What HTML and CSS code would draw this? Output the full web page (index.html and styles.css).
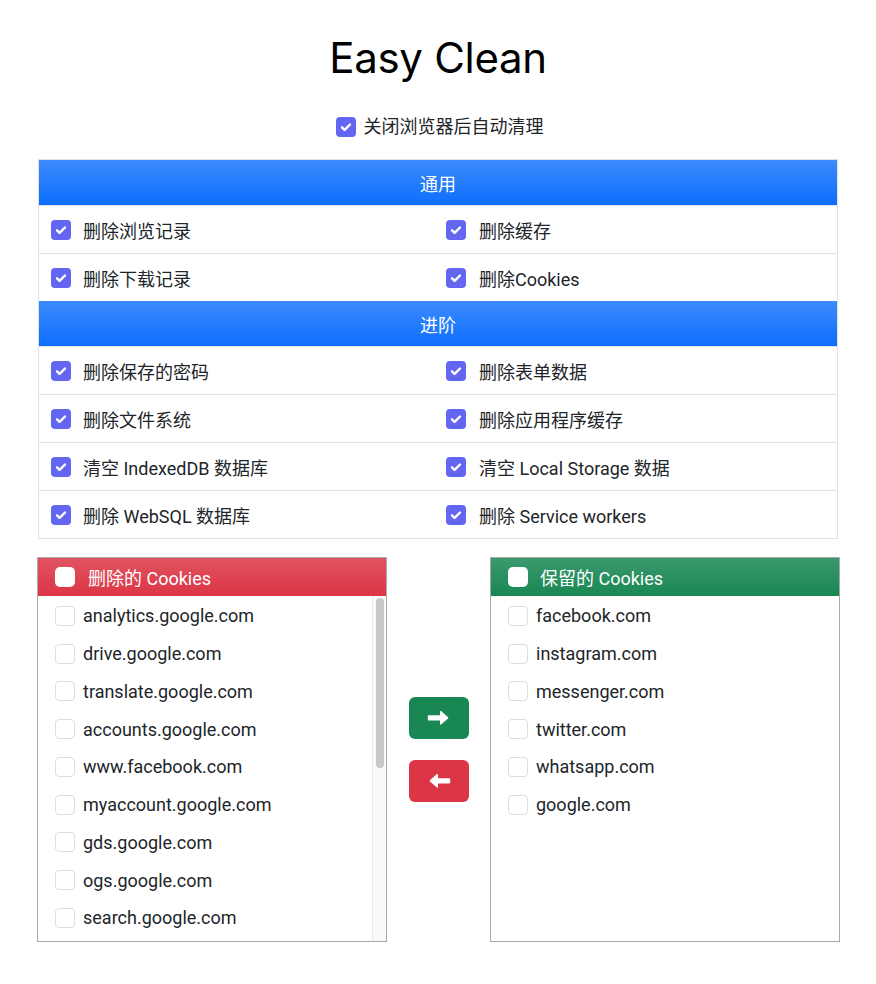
FILE: index.html
```html
<!DOCTYPE html>
<html lang="zh-CN">
<head>
<meta charset="utf-8">
<title>Easy Clean</title>
<link rel="stylesheet" href="styles.css">
</head>
<body>
<h1 class="title">Easy Clean</h1>

<label class="auto">
  <span class="cb on"><svg viewBox="0 0 20 20"><path d="M6 10.3l2.6 2.6L14 7.5" fill="none" stroke="#fff" stroke-width="2.4" stroke-linecap="round" stroke-linejoin="round"/></svg></span>
  <span>关闭浏览器后自动清理</span>
</label>

<div class="table">
  <div class="thead">通用</div>
  <div class="trow">
    <label class="cell"><span class="cb on"><svg viewBox="0 0 20 20"><path d="M6 10.3l2.6 2.6L14 7.5" fill="none" stroke="#fff" stroke-width="2.4" stroke-linecap="round" stroke-linejoin="round"/></svg></span>删除浏览记录</label>
    <label class="cell c2"><span class="cb on"><svg viewBox="0 0 20 20"><path d="M6 10.3l2.6 2.6L14 7.5" fill="none" stroke="#fff" stroke-width="2.4" stroke-linecap="round" stroke-linejoin="round"/></svg></span>删除缓存</label>
  </div>
  <div class="trow">
    <label class="cell"><span class="cb on"><svg viewBox="0 0 20 20"><path d="M6 10.3l2.6 2.6L14 7.5" fill="none" stroke="#fff" stroke-width="2.4" stroke-linecap="round" stroke-linejoin="round"/></svg></span>删除下载记录</label>
    <label class="cell c2"><span class="cb on"><svg viewBox="0 0 20 20"><path d="M6 10.3l2.6 2.6L14 7.5" fill="none" stroke="#fff" stroke-width="2.4" stroke-linecap="round" stroke-linejoin="round"/></svg></span>删除Cookies</label>
  </div>
  <div class="thead">进阶</div>
  <div class="trow">
    <label class="cell"><span class="cb on"><svg viewBox="0 0 20 20"><path d="M6 10.3l2.6 2.6L14 7.5" fill="none" stroke="#fff" stroke-width="2.4" stroke-linecap="round" stroke-linejoin="round"/></svg></span>删除保存的密码</label>
    <label class="cell c2"><span class="cb on"><svg viewBox="0 0 20 20"><path d="M6 10.3l2.6 2.6L14 7.5" fill="none" stroke="#fff" stroke-width="2.4" stroke-linecap="round" stroke-linejoin="round"/></svg></span>删除表单数据</label>
  </div>
  <div class="trow">
    <label class="cell"><span class="cb on"><svg viewBox="0 0 20 20"><path d="M6 10.3l2.6 2.6L14 7.5" fill="none" stroke="#fff" stroke-width="2.4" stroke-linecap="round" stroke-linejoin="round"/></svg></span>删除文件系统</label>
    <label class="cell c2"><span class="cb on"><svg viewBox="0 0 20 20"><path d="M6 10.3l2.6 2.6L14 7.5" fill="none" stroke="#fff" stroke-width="2.4" stroke-linecap="round" stroke-linejoin="round"/></svg></span>删除应用程序缓存</label>
  </div>
  <div class="trow">
    <label class="cell"><span class="cb on"><svg viewBox="0 0 20 20"><path d="M6 10.3l2.6 2.6L14 7.5" fill="none" stroke="#fff" stroke-width="2.4" stroke-linecap="round" stroke-linejoin="round"/></svg></span>清空 IndexedDB 数据库</label>
    <label class="cell c2"><span class="cb on"><svg viewBox="0 0 20 20"><path d="M6 10.3l2.6 2.6L14 7.5" fill="none" stroke="#fff" stroke-width="2.4" stroke-linecap="round" stroke-linejoin="round"/></svg></span>清空 Local Storage 数据</label>
  </div>
  <div class="trow">
    <label class="cell"><span class="cb on"><svg viewBox="0 0 20 20"><path d="M6 10.3l2.6 2.6L14 7.5" fill="none" stroke="#fff" stroke-width="2.4" stroke-linecap="round" stroke-linejoin="round"/></svg></span>删除 WebSQL 数据库</label>
    <label class="cell c2"><span class="cb on"><svg viewBox="0 0 20 20"><path d="M6 10.3l2.6 2.6L14 7.5" fill="none" stroke="#fff" stroke-width="2.4" stroke-linecap="round" stroke-linejoin="round"/></svg></span>删除 Service workers</label>
  </div>
</div>

<div class="cookies">
  <div class="box">
    <div class="bhead red"><span class="cb white"></span>删除的 Cookies</div>
    <div class="lwrap">
      <ul class="list">
        <li><span class="cb off"></span>analytics.google.com</li>
        <li><span class="cb off"></span>drive.google.com</li>
        <li><span class="cb off"></span>translate.google.com</li>
        <li><span class="cb off"></span>accounts.google.com</li>
        <li><span class="cb off"></span>www.facebook.com</li>
        <li><span class="cb off"></span>myaccount.google.com</li>
        <li><span class="cb off"></span>gds.google.com</li>
        <li><span class="cb off"></span>ogs.google.com</li>
        <li><span class="cb off"></span>search.google.com</li>
      </ul>
      <div class="sbar"><div class="thumb"></div></div>
    </div>
  </div>

  <div class="moves">
    <button class="btn green" type="button" aria-label="移到保留">
      <svg viewBox="0 0 24 16" width="24" height="16"><path d="M1.5 5.2H13V1.6c0-.6.7-.9 1.1-.5l7 6.2c.3.3.3.8 0 1.1l-7 6.2c-.4.4-1.1.1-1.1-.5v-3.6H1.5c-.4 0-.7-.3-.7-.7V5.9c0-.4.3-.7.7-.7z" fill="#fff"/></svg>
    </button>
    <button class="btn red" type="button" aria-label="移到删除">
      <svg viewBox="0 0 24 16" width="24" height="16"><path d="M22.5 5.2H11V1.6c0-.6-.7-.9-1.1-.5l-7 6.2c-.3.3-.3.8 0 1.1l7 6.2c.4.4 1.1.1 1.1-.5v-3.6h11.5c.4 0 .7-.3.7-.7V5.9c0-.4-.3-.7-.7-.7z" fill="#fff"/></svg>
    </button>
  </div>

  <div class="box">
    <div class="bhead green"><span class="cb white"></span>保留的 Cookies</div>
    <div class="lwrap">
      <ul class="list">
        <li><span class="cb off"></span>facebook.com</li>
        <li><span class="cb off"></span>instagram.com</li>
        <li><span class="cb off"></span>messenger.com</li>
        <li><span class="cb off"></span>twitter.com</li>
        <li><span class="cb off"></span>whatsapp.com</li>
        <li><span class="cb off"></span>google.com</li>
      </ul>
    </div>
  </div>
</div>
</body>
</html>
```

FILE: styles.css
```css
* { box-sizing: border-box; }

body {
  margin: 0;
  font-family: Roboto, "Noto Sans CJK SC", sans-serif;
  font-size: 18px;
  color: #212529;
  background: #fff;
}

.title {
  margin: 0;
  padding-top: 33px;
  font-family: Inter, "Noto Sans CJK SC", sans-serif;
  font-size: 42px;
  line-height: 50px;
  font-weight: 400;
  text-align: center;
  color: #000;
  letter-spacing: -0.3px;
}

.auto {
  margin-top: 34px;
  display: flex;
  justify-content: center;
  align-items: center;
  gap: 8px;
  height: 20px;
  line-height: 20px;
  padding-left: 3px;
}

.cb {
  flex: none;
  width: 20px;
  height: 20px;
  border-radius: 4px;
  display: inline-flex;
}
.cb svg { width: 20px; height: 20px; }
.cb.on { background: #6366f1; }
.cb.off { border: 1px solid #dcdde0; background: #fff; }
.cb.white { background: #fff; border-radius: 5px; }

.table {
  width: 800px;
  margin: 22px auto 0;
  border: 1px solid #dee2e6;
}

.thead {
  height: 45px;
  display: flex;
  align-items: center;
  justify-content: center;
  color: #fff;
  background-color: #0d6efd;
  background-image: linear-gradient(180deg, rgba(255,255,255,.2), rgba(255,255,255,0));
}

.trow {
  display: grid;
  grid-template-columns: 395px 1fr;
  height: 48px;
  border-top: 1px solid #dee2e6;
}
.trow + .thead { border-top: 0; }

.cell {
  display: flex;
  align-items: center;
  gap: 12px;
  padding-left: 12px;
}
.cell.c2 { gap: 13px; }

.cookies {
  width: 803px;
  margin: 18px 0 0 37px;
  display: flex;
  justify-content: space-between;
  align-items: center;
}

.box {
  width: 350px;
  height: 385px;
  border: 1px solid #a8a8a8;
  display: flex;
  flex-direction: column;
}

.bhead {
  height: 38px;
  flex: none;
  display: flex;
  align-items: center;
  gap: 13px;
  padding-left: 17px;
  color: #fff;
  background-image: linear-gradient(180deg, rgba(255,255,255,.15), rgba(255,255,255,0));
}
.bhead.red { background-color: #dc3545; }
.bhead.green { background-color: #198754; gap: 12px; }

.lwrap {
  flex: 1;
  display: flex;
  min-height: 0;
  overflow: hidden;
}

.list {
  list-style: none;
  margin: 0;
  padding: 1px 0 0;
  flex: 1;
}

.list li {
  height: 37.75px;
  display: flex;
  align-items: center;
  gap: 8px;
  padding-left: 17px;
}

.sbar {
  flex: none;
  width: 14px;
  background: #fafafa;
  border-left: 1px solid #e8e8e8;
  padding: 2px 2px 0 3px;
}
.thumb {
  height: 170px;
  border-radius: 4px;
  background: #c8c8c8;
}

.moves {
  display: flex;
  flex-direction: column;
  gap: 21px;
  margin-top: -1px;
}

.btn {
  width: 60px;
  height: 42px;
  border: 0;
  border-radius: 6px;
  padding: 0;
  display: flex;
  align-items: center;
  justify-content: center;
  cursor: pointer;
}
.btn.green { background: #198754; }
.btn.red { background: #dc3545; }
```
